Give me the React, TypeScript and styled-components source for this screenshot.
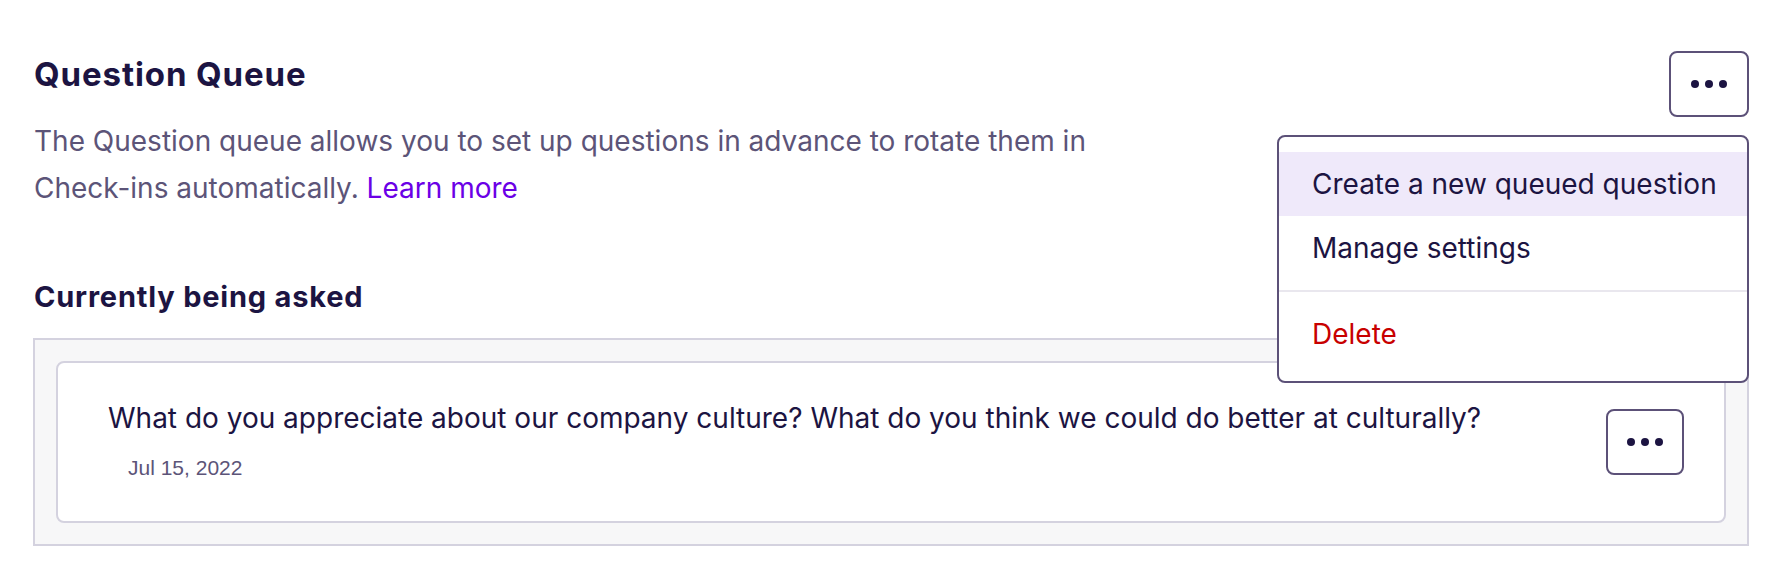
import React from 'react';
import styled, { createGlobalStyle } from 'styled-components';

const GlobalStyle = createGlobalStyle`
  html, body {
    margin: 0;
    padding: 0;
    background: #ffffff;
  }

  body {
    font-family: Inter, "Noto Sans", sans-serif;
    color: #1c1442;
  }
`;

const Page = styled.div`
  padding: 51px 35px 40px 33px;
`;

const Header = styled.div`
  display: flex;
  justify-content: space-between;
  align-items: flex-start;
`;

const Intro = styled.div`
  display: flex;
  flex-direction: column;
  padding-left: 1px;
`;

const Title = styled.h1`
  margin: 3px 0 0;
  font-size: 33px;
  line-height: 40px;
  letter-spacing: 0.9px;
  font-weight: 700;
  color: #1c1442;
`;

const Description = styled.p`
  margin: 24px 0 0;
  max-width: 1090px;
  font-size: 28px;
  line-height: 47px;
  color: #5c5478;
`;

const Link = styled.a`
  color: #6b00e6;
  text-decoration: none;
  cursor: pointer;
`;

const MenuAnchor = styled.div`
  position: relative;
`;

const DotsButton = styled.button<{ $width: number }>`
  display: flex;
  align-items: center;
  justify-content: center;
  width: ${({ $width }) => $width}px;
  height: 66px;
  padding: 0;
  border: 2px solid #5c5178;
  border-radius: 8px;
  background: #ffffff;
  color: #1c1442;
  cursor: pointer;
`;

const Menu = styled.div`
  position: absolute;
  top: 84px;
  right: 0;
  z-index: 10;
  width: 472px;
  box-sizing: border-box;
  padding: 15px 0;
  border: 2px solid #5c5178;
  border-radius: 8px;
  background: #ffffff;
`;

const MenuItem = styled.div<{ $active?: boolean; $danger?: boolean }>`
  display: flex;
  align-items: center;
  height: 64px;
  padding: 0 33px;
  font-size: 28px;
  white-space: nowrap;
  color: ${({ $danger }) => ($danger ? '#c80000' : '#1c1442')};
  background: ${({ $active }) => ($active ? '#efe9fa' : 'transparent')};
  cursor: pointer;
`;

const MenuDivider = styled.hr`
  margin: 10px 0;
  height: 2px;
  border: 0;
  background: #e9e7ee;
`;

const SectionTitle = styled.h2`
  margin: 67px 0 0 1px;
  font-size: 29px;
  line-height: 36px;
  letter-spacing: 0.8px;
  font-weight: 700;
  color: #1c1442;
`;

const Queue = styled.div`
  margin-top: 23px;
  padding: 21px;
  border: 2px solid #d4d2df;
  background: #f7f7f8;
`;

const QuestionCard = styled.div`
  display: flex;
  align-items: center;
  justify-content: space-between;
  min-height: 162px;
  box-sizing: border-box;
  padding: 0 40px 0 50px;
  border: 2px solid #d4d2df;
  border-radius: 8px;
  background: #ffffff;
`;

const QuestionBody = styled.div`
  display: flex;
  flex-direction: column;
  padding-bottom: 4px;
`;

const QuestionText = styled.div`
  font-size: 28px;
  line-height: 40px;
  color: #1c1442;
`;

const QuestionDate = styled.div`
  margin: 16px 0 0 20px;
  font-family: "Liberation Sans", Arial, sans-serif;
  font-size: 21px;
  line-height: 28px;
  color: #5c5478;
`;

function Dots() {
  return (
    <svg width="36" height="8" viewBox="0 0 36 8" fill="currentColor" aria-hidden="true">
      <circle cx="4" cy="4" r="4" />
      <circle cx="18" cy="4" r="4" />
      <circle cx="32" cy="4" r="4" />
    </svg>
  );
}

export default function App(): JSX.Element {
  return (
    <>
      <GlobalStyle />
      <Page>
        <Header>
          <Intro>
            <Title>Question Queue</Title>
            <Description>
              The Question queue allows you to set up questions in advance to rotate them in
              Check-ins automatically. <Link>Learn more</Link>
            </Description>
          </Intro>
          <MenuAnchor>
            <DotsButton $width={80} aria-label="More actions">
              <Dots />
            </DotsButton>
            <Menu>
              <MenuItem $active>Create a new queued question</MenuItem>
              <MenuItem>Manage settings</MenuItem>
              <MenuDivider />
              <MenuItem $danger>Delete</MenuItem>
            </Menu>
          </MenuAnchor>
        </Header>

        <SectionTitle>Currently being asked</SectionTitle>
        <Queue>
          <QuestionCard>
            <QuestionBody>
              <QuestionText>
                What do you appreciate about our company culture? What do you think we could do better at culturally?
              </QuestionText>
              <QuestionDate>Jul 15, 2022</QuestionDate>
            </QuestionBody>
            <DotsButton $width={78} aria-label="Question actions">
              <Dots />
            </DotsButton>
          </QuestionCard>
        </Queue>
      </Page>
    </>
  );
}
